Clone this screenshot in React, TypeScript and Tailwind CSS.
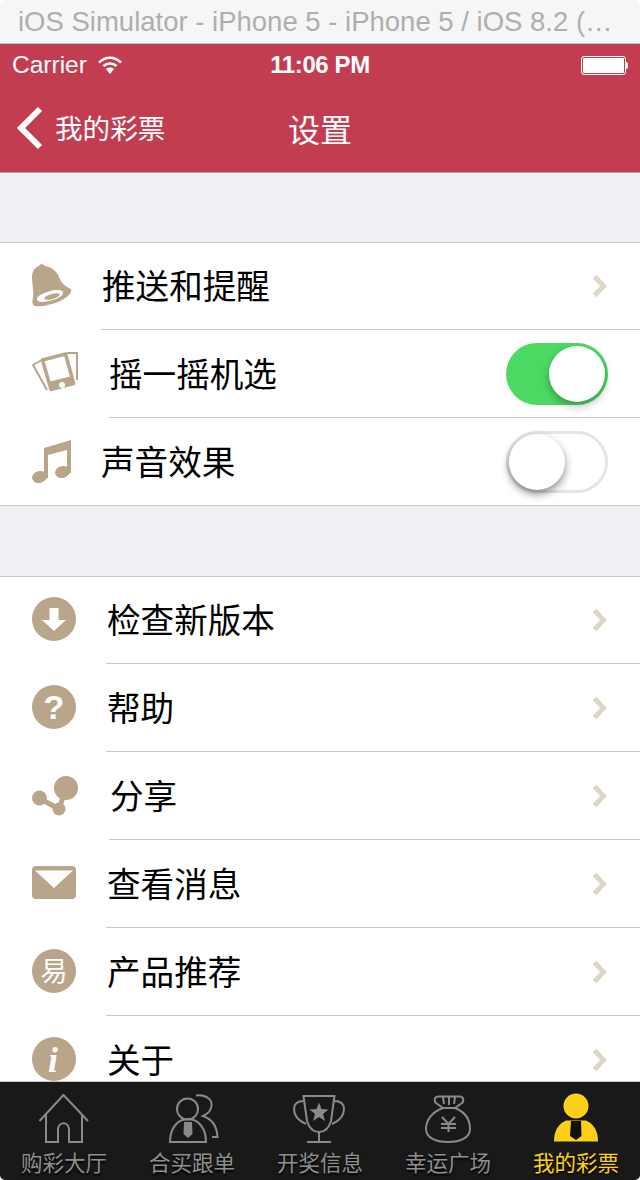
import type { ReactNode } from "react"

const TAN = "#b9a68a"
const GRAY = "#8a8a8a"
const YELLOW = "#fdd017"
const CJK = "font-['Noto_Sans_CJK_SC','Liberation_Sans',sans-serif]"

function Chevron() {
    return (
        <svg width="16" height="24" viewBox="0 0 16 24" fill="none" aria-hidden>
            <path d="M2.5 2.5 11.5 12 2.5 21.5" stroke="#ddd8c8" strokeWidth="5" />
        </svg>
    )
}

function Toggle({ on }: { on: boolean }) {
    if (on) {
        return (
            <div className="flex h-[62px] w-[102px] items-center justify-end rounded-full bg-[#4bd964] pr-[3px]">
                <div className="h-[56px] w-[56px] rounded-full bg-white shadow-[0_4px_8px_rgba(0,0,0,0.3)]" />
            </div>
        )
    }
    return (
        <div className="flex h-[62px] w-[102px] items-center rounded-full border-[3px] border-[#e5e5e5] bg-white">
            <div className="h-[56px] w-[56px] rounded-full bg-white shadow-[0_4px_8px_rgba(0,0,0,0.45)]" />
        </div>
    )
}

function Row({
    icon,
    label,
    inset,
    pad = "pl-[1px]",
    height = "h-[88px]",
    line = true,
    right = <Chevron />,
}: {
    icon: ReactNode
    label: string
    inset: string
    pad?: string
    height?: string
    line?: boolean
    right?: ReactNode
}) {
    return (
        <div className={`flex bg-white ${height}`}>
            <div className={`flex shrink-0 items-center pl-[32px] ${inset}`}>{icon}</div>
            <div className={`flex min-w-0 flex-1 items-center justify-between pr-[32px] ${pad} ${line ? "border-b border-[#c8c7cc]" : ""}`}>
                <span className="mb-[2px] text-[33.6px] leading-none text-black">{label}</span>
                {right}
            </div>
        </div>
    )
}

function CircleIcon({ children }: { children: ReactNode }) {
    return (
        <svg width="44" height="44" viewBox="0 0 44 44" className="mb-[3px]" aria-hidden>
            <circle cx="22" cy="22" r="22" fill={TAN} />
            {children}
        </svg>
    )
}

function Bell() {
    return (
        <svg width="40" height="44" viewBox="0 0 40 44" className="mb-[2px]" aria-hidden>
            <path
                d="M9 0C11 0 12 1 13 2 19 3 25 7 27 13 29 19 34 23 39 25 40 29 36 33 28 37 20 41 8 43 3 42 0 41 0 38 1 33 2 27 0 20 0 13 0 8 3 3 7 2Z"
                fill={TAN}
            />
            <ellipse cx="18" cy="32" rx="13.500" ry="4.800" transform="rotate(-16 18 32)" fill="white" />
            <ellipse cx="20" cy="32.500" rx="8" ry="2.600" transform="rotate(-16 20 32.500)" fill={TAN} />
        </svg>
    )
}

function Shake() {
    return (
        <svg width="46" height="44" viewBox="32 352 46 44" fill="none" aria-hidden>
            <path d="M42 360 33 365 47 390" stroke={TAN} strokeWidth="2" />
            <path d="M67 353H77V380" stroke={TAN} strokeWidth="2" />
            <path d="M42.500 360 65.500 354 73.500 383 51 389.500Z" stroke={TAN} strokeWidth="3.500" strokeLinejoin="round" />
            <path d="M48 382 72 376 75 385 50 391Z" fill={TAN} />
            <circle cx="62" cy="385" r="3" fill="white" />
        </svg>
    )
}

function Music() {
    return (
        <svg width="40" height="44" viewBox="32 439 40 44" aria-hidden>
            <path d="M44 447 71 439V472H67V449L48 454V477H44Z" fill={TAN} />
            <ellipse cx="39.500" cy="476" rx="7.500" ry="6" transform="rotate(-14 39.500 476)" fill={TAN} />
            <ellipse cx="62.500" cy="471" rx="7.500" ry="6" transform="rotate(-14 62.500 471)" fill={TAN} />
        </svg>
    )
}

function Share() {
    return (
        <svg width="46" height="42" className="mb-[1px]" viewBox="32 774 46 42" aria-hidden>
            <path d="M39 797 59 808 66 787" stroke={TAN} strokeWidth="5" fill="none" />
            <circle cx="66" cy="787" r="12" fill={TAN} />
            <circle cx="39.500" cy="797" r="7.500" fill={TAN} />
            <circle cx="59" cy="808" r="6.500" fill={TAN} />
        </svg>
    )
}

function Mail() {
    return (
        <svg width="44" height="33" viewBox="32 866 44 33" className="mb-[3px]" aria-hidden>
            <rect x="32" y="866" width="44" height="33" rx="4" fill={TAN} />
            <path d="M35 870.500H73L54 888Z" fill="white" />
        </svg>
    )
}

function TabIcon({ view, children }: { view: string; children: ReactNode }) {
    return (
        <svg width="128" height="56" viewBox={view} fill="none" aria-hidden>
            {children}
        </svg>
    )
}

const TABS: { label: string; view: string; active?: boolean; icon: ReactNode }[] = [
    {
        label: "购彩大厅",
        view: "0 1092 128 56",
        icon: (
            <g stroke={GRAY} strokeWidth="2">
                <path d="M39.500 1122 63.500 1096 88 1122" />
                <path d="M46 1116V1143H58V1131C58 1122 69 1122 69 1131V1143H82V1116" />
            </g>
        ),
    },
    {
        label: "合买跟单",
        view: "128 1092 128 56",
        icon: (
            <g stroke={GRAY} strokeWidth="2">
                <circle cx="187.500" cy="1110" r="10.500" />
                <path d="M170 1143C170 1130 177 1120 188 1120 199 1120 206 1130 206 1143Z" />
                <path d="M184 1123H192L192.500 1135 188 1139 183.500 1135Z" fill={GRAY} stroke="none" />
                <path d="M196 1096.500C206 1095 214 1101 211 1109 210 1113 207 1115 203 1117 212 1120 217 1128 217.500 1138H212" />
            </g>
        ),
    },
    {
        label: "开奖信息",
        view: "256 1092 128 56",
        icon: (
            <g stroke={GRAY} strokeWidth="2">
                <path d="M303.500 1097H334.500L331 1122C329 1129 325 1133 319 1133 313 1133 309 1129 307 1122Z" />
                <path d="M304 1102C297 1102 294 1105 294 1110 294 1117 299 1122 306 1125" />
                <path d="M334 1102C341 1102 344 1105 344 1110 344 1117 339 1122 332 1125" />
                <path d="M319 1133V1143M307 1143H331" />
                <path d="M319 1103.500 321.500 1110 328.500 1110.500 323 1115 325 1122 319 1118 313 1122 315 1115 309.500 1110.500 316.500 1110Z" fill={GRAY} stroke="none" />
            </g>
        ),
    },
    {
        label: "幸运广场",
        view: "384 1092 128 56",
        icon: (
            <g stroke={GRAY} strokeWidth="2">
                <path d="M438 1097.500H460C464 1098 464 1102 462 1104L455 1109H443L436 1104C434 1102 434 1098 438 1097.500Z" />
                <path d="M443 1109C432 1113 426 1121 426 1130 426 1139 436 1143 448 1143 460 1143 470 1139 470 1130 470 1121 465 1113 455 1109" />
                <path d="M443 1098 444 1105M449 1098V1106M455 1098 454 1105" />
                <path d="M442 1118 448.500 1125 455 1118M448.500 1125V1133M441 1125H456M441 1129H456" />
            </g>
        ),
    },
    {
        label: "我的彩票",
        view: "512 1092 128 56",
        active: true,
        icon: (
            <g>
                <circle cx="576" cy="1107" r="12.500" fill={YELLOW} />
                <path d="M554 1142.500C554 1132 558 1125 566 1121.500H586C594 1125 598 1132 598 1142.500Z" fill={YELLOW} />
                <path d="M571 1122H581L581.500 1137 576 1141 570 1137Z" fill="#111" />
            </g>
        ),
    },
]

export default function App() {
    return (
        <div className={`flex h-[1180px] w-[640px] flex-col overflow-hidden bg-white ${CJK}`}>
            <div className="flex h-[44px] shrink-0 items-center overflow-hidden rounded-t-[8px] border-b border-[#c4c4c4] bg-[#f6f6f6] pl-[18px] font-['Liberation_Sans',sans-serif] text-[27.500px] whitespace-nowrap text-[#aeaeae]">
                iOS Simulator - iPhone 5 - iPhone 5 / iOS 8.2 (…
            </div>

            <header className="shrink-0 border-b border-[#b0a9ac] bg-[#c33d51] text-white">
                <div className="flex h-[40px] items-center justify-between pl-[12px] pr-[12px] pt-[2px] font-['Liberation_Sans',sans-serif] text-[24.500px] leading-none">
                    <div className="flex w-[200px] items-center gap-[11px]">
                        <span>Carrier</span>
                        <svg width="24" height="18" viewBox="0 0 24 18" fill="none" aria-hidden>
                            <path d="M1 6.500C7.500 0 16.500 0 23 6.500" stroke="white" strokeWidth="2.500" />
                            <path d="M5.500 10C9 6.500 15 6.500 18.500 10" stroke="white" strokeWidth="2.500" />
                            <path d="M12 18 8 13C10 11 14 11 16 13Z" fill="white" />
                        </svg>
                    </div>
                    <span className="text-[24px] font-bold tracking-[-0.4px]">11:06 PM</span>
                    <div className="flex w-[200px] items-center justify-end">
                        <div className="h-[19px] w-[45px] rounded-[3px] border border-white p-[1px]">
                            <div className="h-full w-full rounded-[1px] bg-white" />
                        </div>
                        <div className="h-[7px] w-[2px] rounded-r-[2px] bg-white" />
                    </div>
                </div>
                <div className="grid h-[88px] grid-cols-[1fr_auto_1fr] items-center">
                    <div className="flex items-center gap-[12px] pl-[16px]">
                        <svg width="27" height="44" viewBox="0 0 27 44" fill="none" aria-hidden>
                            <path d="M24 3 5 22 24 41" stroke="white" strokeWidth="6" />
                        </svg>
                        <span className="text-[27.600px] leading-none">我的彩票</span>
                    </div>
                    <span className="text-[32px] leading-none">设置</span>
                    <div />
                </div>
            </header>

            <main className="min-h-0 flex-1 overflow-hidden bg-[#efeff4]">
                <div className="h-[69px]" />
                <section className="border-y border-[#c8c7cc]">
                    <Row height="h-[87px]" inset="w-[101px]" icon={<Bell />} label="推送和提醒" />
                    <Row inset="w-[109px]" pad="pl-0" icon={<Shake />} label="摇一摇机选" right={<Toggle on />} />
                    <Row height="h-[87px]" inset="w-[101px]" pad="pl-0" line={false} icon={<Music />} label="声音效果" right={<Toggle on={false} />} />
                </section>
                <div className="h-[70px]" />
                <section className="border-t border-[#c8c7cc]">
                    <Row
                        height="h-[87px]"
                        inset="w-[106px]"
                        icon={
                            <CircleIcon>
                                <path d="M17.500 11H26.500V23H34L22 34 10 23H17.500Z" fill="white" />
                            </CircleIcon>
                        }
                        label="检查新版本"
                    />
                    <Row
                        inset="w-[106px]"
                        icon={
                            <CircleIcon>
                                <text x="22" y="34" textAnchor="middle" fontSize="34" fontWeight="700" fill="white" fontFamily="Liberation Sans">?</text>
                            </CircleIcon>
                        }
                        label="帮助"
                    />
                    <Row inset="w-[109px]" icon={<Share />} label="分享" />
                    <Row inset="w-[106px]" icon={<Mail />} label="查看消息" />
                    <Row
                        inset="w-[106px]"
                        icon={
                            <CircleIcon>
                                <text x="22" y="32" textAnchor="middle" fontSize="27" fill="white" fontWeight="400" fontFamily="Noto Sans CJK SC">易</text>
                            </CircleIcon>
                        }
                        label="产品推荐"
                    />
                    <Row
                        inset="w-[106px]"
                        line={false}
                        icon={
                            <CircleIcon>
                                <text x="21" y="35" textAnchor="middle" fontSize="36" fontWeight="700" fontStyle="italic" fill="white" fontFamily="Liberation Serif">i</text>
                            </CircleIcon>
                        }
                        label="关于"
                    />
                </section>
            </main>

            <nav className="grid h-[99px] shrink-0 grid-cols-5 rounded-b-[5px] border-t border-[#c9c9c9] bg-[#191919]">
                {TABS.map((tab) => (
                    <div key={tab.label} className="flex flex-col items-center pt-[9px]">
                        <TabIcon view={tab.view}>{tab.icon}</TabIcon>
                        <span className={`text-[21.500px] leading-[30px] [text-shadow:0_2px_2px_#000] ${tab.active ? "text-[#fdd017]" : "text-[#8f8f8f]"}`}>
                            {tab.label}
                        </span>
                    </div>
                ))}
            </nav>
        </div>
    )
}
